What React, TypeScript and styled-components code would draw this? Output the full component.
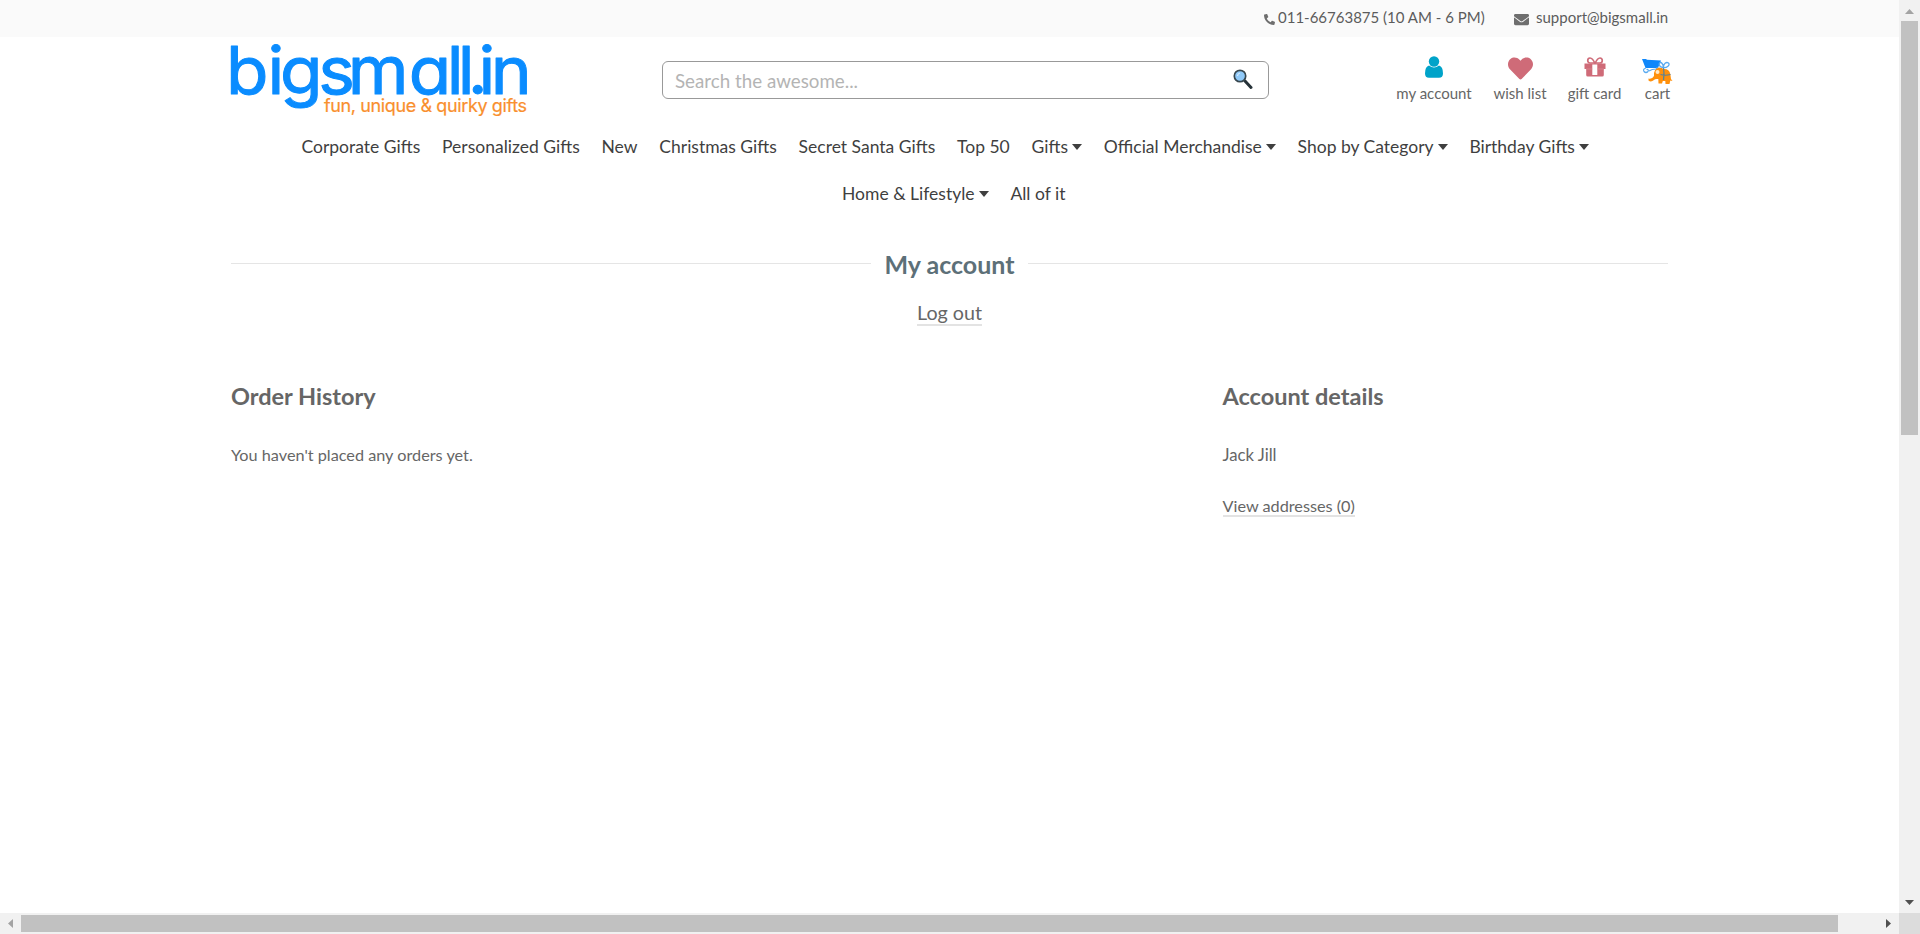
import React from "react";
import styled, { createGlobalStyle } from "styled-components";
import { FaPhone, FaEnvelope, FaHeart } from "react-icons/fa";

const Global = createGlobalStyle`
  *, *::before, *::after { box-sizing: border-box; }
  html, body { margin: 0; padding: 0; background: #fff; overflow: hidden; }
  body { font-family: Lato, "Liberation Sans", sans-serif; color: #666; }
  h1, h2, p { margin: 0; }
  a { color: inherit; text-decoration: none; }
`;

const Window = styled.div`
  display: grid;
  grid-template: 913px 21px / 1899px 21px;
  width: 1920px;
  height: 934px;
  overflow: hidden;
`;

const Page = styled.div`
  overflow: hidden;
`;

const TopBar = styled.div`
  display: flex;
  justify-content: flex-end;
  height: 37px;
  padding: 0 230px 0 0;
  background: #fafafa;
  color: #5c5c5c;
  font-size: 15px;
  line-height: 35px;
`;

const Contact = styled.a<{ $gap: number; $left?: number; $width: number }>`
  display: flex;
  align-items: center;
  height: 35px;
  width: ${(p) => p.$width}px;
  gap: ${(p) => p.$gap}px;
  margin-left: ${(p) => p.$left ?? 0}px;
  white-space: nowrap;
  svg { margin-top: 4px; color: #6e6e6e; flex: none; }
`;

const Container = styled.div`
  width: 1437px;
  margin: 0 auto;
`;

const Header = styled.header`
  display: flex;
  align-items: flex-start;
  height: 91px;
  padding-top: 7px;
`;

const Logo = styled.svg`
  display: block;
  flex: none;
  margin-right: 134px;
  overflow: visible;
  font-family: Inter, sans-serif;
  font-feature-settings: "cv11";
`;

const Search = styled.label`
  display: flex;
  justify-content: space-between;
  width: 607px;
  height: 38px;
  margin-top: 17px;
  padding: 0 15px 0 12px;
  border: 1px solid #999;
  border-radius: 6px;
`;

const SearchInput = styled.input`
  flex: 1;
  border: 0;
  outline: 0;
  padding: 0;
  background: none;
  font: 18.75px Lato, sans-serif;
  color: #666;
  &::placeholder { color: #b4b4b4; opacity: 1; }
`;

const SearchIcon = styled.svg`
  margin-top: 7px;
`;

const Shortcuts = styled.nav`
  display: flex;
  margin: 12px -5px 0 auto;
  gap: 21px;
`;

const Shortcut = styled.a<{ $width: number }>`
  display: flex;
  flex-direction: column;
  align-items: center;
  width: ${(p) => p.$width}px;
  font-size: 15px;
  line-height: 20px;
  white-space: nowrap;
  color: #666;
`;

const IconSlot = styled.span<{ $top?: number }>`
  display: flex;
  justify-content: center;
  align-items: flex-start;
  height: 27px;
  padding-top: ${(p) => p.$top ?? 0}px;
`;

const Menu = styled.nav`
  display: flex;
  flex-direction: column;
  height: 94px;
`;

const MenuRow = styled.div<{ $left: number }>`
  display: flex;
  gap: 21.8px;
  height: 47px;
  padding-left: ${(p) => p.$left}px;
  line-height: 38px;
`;

const MenuItem = styled.a`
  display: flex;
  align-items: center;
  gap: 4px;
  height: 38px;
  font-size: 17.5px;
  color: #3f3f3f;
  white-space: nowrap;
`;

const Caret = styled.span`
  border: 5.5px solid transparent;
  border-top: 6.5px solid #3f3f3f;
  border-bottom: 0;
`;

const TitleRow = styled.div`
  display: flex;
  align-items: center;
  height: 32px;
  margin-top: 26px;
  gap: 13px;
  &::before, &::after {
    content: "";
    flex: 1;
    height: 1px;
    margin-bottom: 2px;
    background: #e5e5e5;
  }
`;

const Title = styled.h1`
  font-size: 25px;
  line-height: 30px;
  color: #5d7078;
`;

const LogoutRow = styled.div`
  display: flex;
  justify-content: center;
  margin-top: 22px;
`;

const Link = styled.a<{ $size: number; $line: number }>`
  font-size: ${(p) => p.$size}px;
  line-height: ${(p) => p.$line}px;
  border-bottom: 2px solid #e3e3e3;
`;

const Columns = styled.main`
  display: grid;
  grid-template-columns: 991.5px 1fr;
  margin-top: 54px;
`;

const Column = styled.section`
  display: flex;
  flex-direction: column;
  align-items: flex-start;
`;

const Heading = styled.h2`
  font-size: 23.5px;
  line-height: 32px;
  margin-bottom: 3px;
  color: #666;
`;

const Text = styled.p<{ $size: number; $top: number }>`
  font-size: ${(p) => p.$size}px;
  line-height: 24px;
  margin-top: ${(p) => p.$top}px;
`;

const VerticalBar = styled.div`
  display: flex;
  flex-direction: column;
  align-items: center;
  background: #f1f1f1;
`;

const HorizontalBar = styled.div`
  display: flex;
  align-items: center;
  background: #f1f1f1;
`;

const Thumb = styled.div<{ $w: number; $h: number }>`
  width: ${(p) => p.$w}px;
  height: ${(p) => p.$h}px;
  background: #c1c1c1;
`;

const Corner = styled.div`
  background: #dcdcdc;
`;

const Spacer = styled.span`
  flex: 1;
`;

const ArrowSvg = styled.svg`
  flex: none;
`;

type Dir = "up" | "down" | "left" | "right";
const points: Record<Dir, string> = {
  up: "6,14 15,14 10.5,9",
  down: "6,8 15,8 10.5,13",
  left: "13,6 13,15 8,10.5",
  right: "8,6 8,15 13,10.5",
};
const Arrow = ({ dir, fill }: { dir: Dir; fill: string }) => (
  <ArrowSvg width="21" height="21" viewBox="0 0 21 21">
    <polygon points={points[dir]} fill={fill} />
  </ArrowSvg>
);

const rowOne: [string, boolean][] = [
  ["Corporate Gifts", false],
  ["Personalized Gifts", false],
  ["New", false],
  ["Christmas Gifts", false],
  ["Secret Santa Gifts", false],
  ["Top 50", false],
  ["Gifts", true],
  ["Official Merchandise", true],
  ["Shop by Category", true],
  ["Birthday Gifts", true],
];
const rowTwo: [string, boolean][] = [
  ["Home & Lifestyle", true],
  ["All of it", false],
];

const items = (list: [string, boolean][]) =>
  list.map(([name, caret]) => (
    <MenuItem key={name}>
      {name}
      {caret && <Caret />}
    </MenuItem>
  ));

const UserIcon = () => (
  <svg width="18" height="22" viewBox="0 0 18 22">
    <circle cx="9" cy="5.5" r="5.2" fill="#00a3c9" />
    <path d="M4 9.500 Q9 13.500 14 9.500 Q18 10.500 18 17.500 Q18 21.700 14 21.700 H4 Q0 21.700 0 17.500 Q0 10.500 4 9.500Z" fill="#00a3c9" />
  </svg>
);

const GiftIcon = () => (
  <svg width="22" height="20" viewBox="0 0 22 20">
    <path d="M0.500 6.500 H21.500 V12 H19.800 V18 Q19.800 19.500 18.300 19.500 H3.700 Q2.200 19.500 2.200 18 V12 H0.500Z" fill="#cf6b78" />
    <path d="M11 6.500 C9.500 3 8 1 6 1 C3 1 3 6 6 6 H16 C19 6 19 1 16 1 C14 1 12.500 3 11 6.500Z" fill="none" stroke="#cf6b78" strokeWidth="1.700" />
    <rect x="8.300" y="7.500" width="5" height="10.500" fill="#fff" />
    <path d="M2.200 12 H8.300 M13.300 12 H19.800" stroke="#dd939c" strokeWidth="0.600" />
  </svg>
);

const CartIcon = () => (
  <svg width="31" height="26" viewBox="0 0 31 26">
    <path d="M0 0 H4 L5 0.800 L19 1.500 L16 9 L3.500 9Z" fill="#0f87fa" />
    <path d="M4 9 Q0.500 10 2 12.500 Q4 14.500 6 12.500 Q7 10 4.500 10.500 M7 12 Q10 10 14 10 L15.500 8" fill="none" stroke="#5aaaf0" strokeWidth="1.200" />
    <path d="M6.500 19.500 Q10 20.500 12 17 Q11.500 9.500 17 8.500 Q20 8.500 21.500 10 Q27 9.500 28.300 15 L29 20 L30.500 22 L28.300 21.500 L27.500 25 H23.500 L23.300 22 H20.800 L20 24.500 H16.500 L16.300 20 Q13 19.500 12 21 Q9 23.500 6.500 21.500Z" fill="#ff900c" />
    <circle cx="15.500" cy="13" r="2" fill="#ffe9c8" />
    <path d="M21.500 9 Q22.500 14 21.500 21 M18.500 15.500 Q23 17 28.500 15.500" fill="none" stroke="#55829c" strokeWidth="1.200" />
    <path d="M21 8.500 C16.500 8 16.500 3.500 18.500 3.500 C20.500 3.500 21 6 21.500 8 C21.500 5 24 2.500 26.500 4 C28.500 6 25 9 21 8.500Z" fill="none" stroke="#5aaaf0" strokeWidth="1.300" />
  </svg>
);

export default function App() {
  return (
    <Window>
      <Global />
      <Page>
        <TopBar>
          <Contact $gap={3} $width={222}>
            <FaPhone size={11} transform="scale(-1 1)" />
            011-66763875 (10 AM - 6 PM)
          </Contact>
          <Contact $gap={7} $left={28} $width={155}>
            <FaEnvelope size={15} />
            support@bigsmall.in
          </Contact>
        </TopBar>
        <Container>
          <Header>
            <Logo width="297" height="75" viewBox="0 0 297 75">
              <text
                x="-4.7 34.4 46.2 82.3 110.2 167.6 203.6 214 223.4 233.4 245"
                y="49.500"
                transform="scale(1.06 1)"
                fontSize="65.5"
                fill="#0a8cff"
                stroke="#0a8cff"
                strokeWidth="1"
                strokeLinejoin="round"
              >
                bigsmall.in
              </text>
              <text x="93" y="68" fontSize="18" fill="#f98f2e" stroke="#f98f2e" strokeWidth="0.2" textLength="203">
                fun, unique &amp; quirky gifts
              </text>
            </Logo>
            <Search>
              <SearchInput placeholder="Search the awesome..." />
              <SearchIcon width="20" height="21" viewBox="0 0 20 21">
                <path d="M12 12 L18 18.500" stroke="#263238" strokeWidth="3" strokeLinecap="round" />
                <circle cx="7" cy="7" r="5.700" fill="#90caf9" stroke="#37474f" strokeWidth="1.700" />
                <path d="M4.500 7 Q4.700 4.500 7 4" stroke="#d6ecff" strokeWidth="1.200" fill="none" />
              </SearchIcon>
            </Search>
            <Shortcuts>
              <Shortcut $width={76}>
                <IconSlot><UserIcon /></IconSlot>
                my account
              </Shortcut>
              <Shortcut $width={54}>
                <IconSlot>
                  <FaHeart size={25} color="#cf6b78" />
                </IconSlot>
                wish list
              </Shortcut>
              <Shortcut $width={53}>
                <IconSlot $top={1}><GiftIcon /></IconSlot>
                gift card
              </Shortcut>
              <Shortcut $width={31}>
                <IconSlot $top={3}><CartIcon /></IconSlot>
                cart
              </Shortcut>
            </Shortcuts>
          </Header>
          <Menu>
            <MenuRow $left={70.5}>{items(rowOne)}</MenuRow>
            <MenuRow $left={611}>{items(rowTwo)}</MenuRow>
          </Menu>
          <TitleRow>
            <Title>My account</Title>
          </TitleRow>
          <LogoutRow>
            <Link $size={19.7} $line={22}>Log out</Link>
          </LogoutRow>
          <Columns>
            <Column>
              <Heading>Order History</Heading>
              <Text $size={16.25} $top={28}>You haven't placed any orders yet.</Text>
            </Column>
            <Column>
              <Heading>Account details</Heading>
              <Text $size={16.7} $top={28}>Jack Jill</Text>
              <Text $size={16.25} $top={27}>
                <Link $size={16.25} $line={24}>View addresses (0)</Link>
              </Text>
            </Column>
          </Columns>
        </Container>
      </Page>
      <VerticalBar>
        <Arrow dir="up" fill="#a3a3a3" />
        <Thumb $w={17} $h={414} />
        <Spacer />
        <Arrow dir="down" fill="#505050" />
      </VerticalBar>
      <HorizontalBar>
        <Arrow dir="left" fill="#a3a3a3" />
        <Thumb $w={1817} $h={17} />
        <Spacer />
        <Arrow dir="right" fill="#505050" />
      </HorizontalBar>
      <Corner />
    </Window>
  );
}
